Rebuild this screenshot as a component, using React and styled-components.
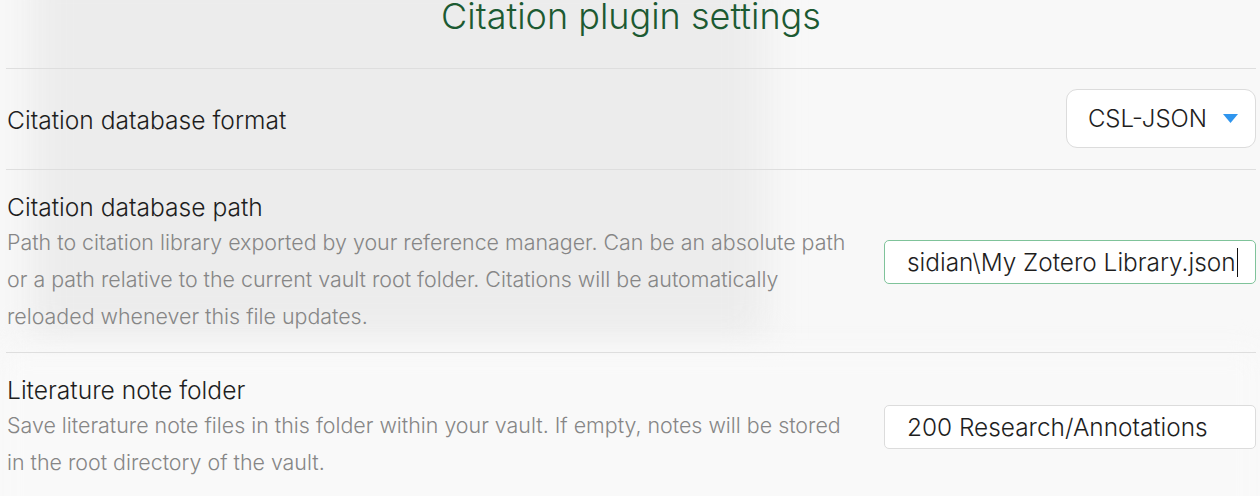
import React from "react";
import styled, { createGlobalStyle } from "styled-components";

const Global = createGlobalStyle`
  html, body { margin: 0; padding: 0; background: #f7f7f7; }
  body { font-family: Inter, "Noto Sans", "Liberation Sans", sans-serif; }
  * { box-sizing: border-box; }
`;

const Page = styled.div`
  position: relative;
  width: 1260px;
  height: 496px;
  overflow: hidden;
  background: #f8f8f8;
  padding: 0 4px 0 6px;
  isolation: isolate;
  &::before {
    content: "";
    position: absolute;
    left: 30px;
    top: -40px;
    width: 735px;
    height: 380px;
    background: #ececec;
    filter: blur(18px);
    z-index: -1;
  }
  &::after {
    content: "";
    position: absolute;
    left: 0;
    top: 350px;
    width: 1260px;
    height: 200px;
    background: #f9f9f9;
    filter: blur(14px);
    z-index: -1;
  }
`;

const Title = styled.h1`
  margin: 0 0 36px;
  text-align: center;
  font-weight: 300;
  font-size: 36px;
  line-height: 32px;
  color: #1c5a32;
`;

const Row = styled.div`
  display: flex;
  align-items: center;
  gap: 38px;
  padding: 20px 0 18px;
  border-top: 1px solid #dedede;
`;

const Info = styled.div`
  flex: 1;
  min-width: 0;
  padding-left: 1px;
`;

const Name = styled.div`
  font-size: 24.6px;
  font-weight: 300;
  line-height: 34px;
  color: #1e1e1e;
`;

const Desc = styled.div`
  font-size: 21.4px;
  font-weight: 300;
  line-height: 36.8px;
  color: #868686;
  max-width: 852px;
`;

const Select = styled.div`
  display: flex;
  align-items: center;
  gap: 16px;
  height: 59px;
  margin: 0 0 3px;
  padding: 0 17px 0 21px;
  background: #fff;
  border: 1px solid #dcdcdc;
  border-radius: 11px;
  font-size: 24px;
  font-weight: 300;
  color: #1e1e1e;
`;

const Field = styled.div`
  flex: 0 0 372px;
  display: flex;
  align-items: center;
  height: 44px;
  padding: 0 22px;
  background: #fff;
  border: 1px solid ${(p) => (p.$focused ? "#7fc39a" : "#dcdcdc")};
  border-radius: 5px;
  font-size: 24.4px;
  font-weight: 300;
  color: #1e1e1e;
  white-space: nowrap;
  overflow: hidden;
`;

const Caret = styled.span`
  display: inline-block;
  flex: 0 0 auto;
  width: 1.5px;
  height: 29px;
  background: #111;
  margin-left: 1px;
`;

const Arrow = () => (
  <svg width="15" height="9" viewBox="0 0 15 9">
    <path d="M0 0 H15 L7.5 9 Z" fill="#2f95ee" />
  </svg>
);

export default function App() {
  return (
    <>
      <Global />
      <Page>
        <Title>Citation plugin settings</Title>
        <Row>
          <Info>
            <Name>Citation database format</Name>
          </Info>
          <Select>
            <span>CSL-JSON</span>
            <Arrow />
          </Select>
        </Row>
        <Row>
          <Info>
            <Name>Citation database path</Name>
            <Desc>
              Path to citation library exported by your reference manager. Can be an absolute path or a path relative to the current vault root folder. Citations will be automatically reloaded whenever this file updates.
            </Desc>
          </Info>
          <Field $focused>
            <span>sidian\My Zotero Library.json</span>
            <Caret />
          </Field>
        </Row>
        <Row>
          <Info>
            <Name>Literature note folder</Name>
            <Desc>
              Save literature note files in this folder within your vault. If empty, notes will be stored in the root directory of the vault.
            </Desc>
          </Info>
          <Field>200 Research/Annotations</Field>
        </Row>
      </Page>
    </>
  );
}
